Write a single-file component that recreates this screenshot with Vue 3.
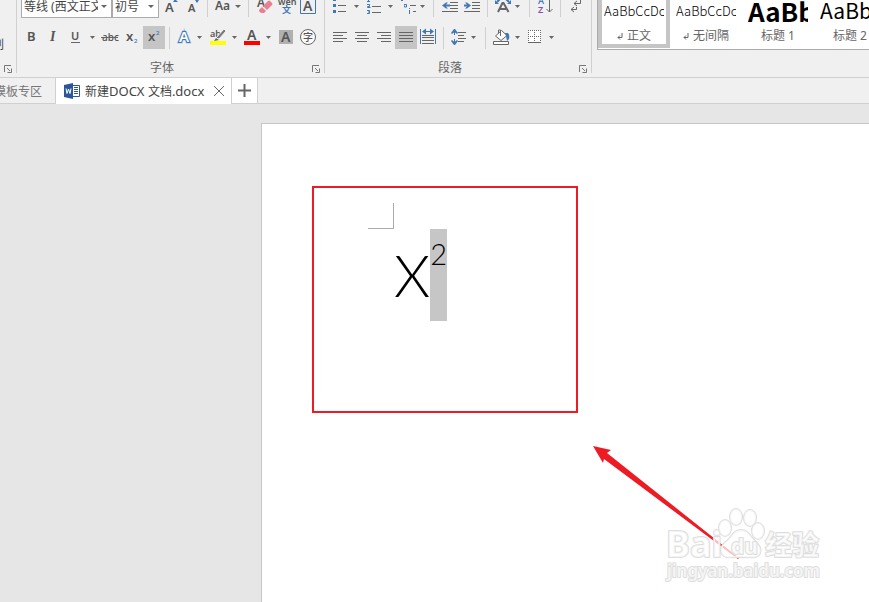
<script setup>
import { ref } from 'vue'

const fontName = ref('body')
const fontSize = ref('initial')
const selectedStyle = ref(0)

const styles = [
  { name: '正文', sample: 'AaBbCcDc', size: 'small', mark: true },
  { name: '无间隔', sample: 'AaBbCcDc', size: 'small', mark: true },
  { name: '标题 1', sample: 'AaBb', size: 'large', mark: false },
  { name: '标题 2', sample: 'AaBbC', size: 'medium', mark: false }
]
</script>

<template>
  <div class="app">
    <header class="ribbon">
      <section class="group clipboard" aria-label="剪贴板">
        <button class="painter">格式刷</button>
        <button class="launcher" aria-label="剪贴板选项">
          <svg width="8" height="8" viewBox="0 0 8 8"><path d="M.5 7V.5H7M3 3l3 3M7.500 3.500V7.500H3.500" /></svg>
        </button>
      </section>

      <section class="group font" aria-label="字体">
        <div class="row top">
          <label class="combo wide">
            <select v-model="fontName" aria-label="字体名称"><option value="body">等线 (西文正文)</option></select>
            <i class="caret"></i>
          </label>
          <label class="combo narrow">
            <select v-model="fontSize" aria-label="字号"><option value="initial">初号</option></select>
            <i class="caret"></i>
          </label>
          <button aria-label="增大字号">
            <svg width="24" height="18" viewBox="159 0 24 18"><text x="165" y="12" class="g" font-size="13">A</text><path class="bf" d="M173 2l2-3 3 3z" /></svg>
          </button>
          <button aria-label="减小字号">
            <svg width="24" height="18" viewBox="183 0 24 18"><text x="188" y="12" class="g" font-size="11">A</text><path class="bf" d="M195 0h4l-2 3z" /></svg>
          </button>
          <i class="sep"></i>
          <button aria-label="更改大小写">
            <svg width="40" height="18" viewBox="208 0 40 18"><text x="215" y="10" class="g" font-size="12">Aa</text><path class="cf" d="M235 5h6l-3 3z" /></svg>
          </button>
          <i class="sep"></i>
          <button aria-label="清除格式">
            <svg width="27" height="18" viewBox="250 0 27 18"><text x="258" y="7" class="g" font-size="12">A</text><path fill="#e8808f" d="M264 6l5-5q1-1 2 0l2 2q1 1 0 2l-5 5z" /><path fill="#e8808f" d="M263 7l4 4-2 2h-3l-2-2v-1z" /></svg>
          </button>
          <button aria-label="拼音指南">
            <svg width="22" height="18" viewBox="277 0 22 18"><text x="279" y="5" class="g" font-size="9">wén</text><text x="283" y="13" class="b" font-size="9">文</text></svg>
          </button>
          <button aria-label="字符边框">
            <svg width="22" height="18" viewBox="299 0 22 18"><path class="bs" d="M301.500 0v13.500h15V0" /><text x="304" y="11" class="g" font-size="14">A</text></svg>
          </button>
        </div>

        <div class="row">
          <button aria-label="加粗"><svg width="22" height="23" viewBox="20 26 22 23"><text x="27" y="41" class="g" font-size="13" font-weight="700">B</text></svg></button>
          <button aria-label="倾斜"><svg width="22" height="23" viewBox="42 26 22 23"><text x="50" y="41" class="g serif" font-size="14">I</text></svg></button>
          <button aria-label="下划线"><svg width="34" height="23" viewBox="64 26 34 23"><text x="71" y="40" class="g" font-size="11">U</text><path class="gs" d="M71 42.500h9" /><path class="cf" d="M90 36h5l-2.500 3z" /></svg></button>
          <button aria-label="删除线"><svg width="23" height="23" viewBox="98 26 23 23"><text x="102" y="41" class="g thin" font-size="10">abc</text><path class="gs" d="M101 37.500h17" /></svg></button>
          <button aria-label="下标"><svg width="22" height="23" viewBox="121 26 22 23"><text x="126" y="41" class="g" font-size="13" font-weight="700">x</text><text x="134" y="43" class="b" font-size="6">2</text></svg></button>
          <button class="on" aria-label="上标" aria-pressed="true"><svg width="22" height="23" viewBox="143 26 22 23"><text x="148" y="41" class="g" font-size="13" font-weight="700">x</text><text x="156" y="35" class="b" font-size="6">2</text></svg></button>
          <i class="sep spaced"></i>
          <button aria-label="文本效果"><svg width="32" height="23" viewBox="174 26 32 23"><text x="179" y="42" font-size="15" font-weight="600" fill="#fff" stroke="#b9d3ee" stroke-width="3" paint-order="stroke">A</text><text x="179" y="42" font-size="15" font-weight="600" fill="#fff" stroke="#3f78b5" stroke-width="2" paint-order="stroke">A</text><path class="cf" d="M197 36h5l-2.500 3z" /></svg></button>
          <button aria-label="突出显示"><svg width="35" height="23" viewBox="206 26 35 23"><text x="210" y="37" class="g" font-size="9">ab</text><path fill="#777" stroke="#f0f0f0" d="M224 29l2 2-7 8-3-1z" /><path fill="#666" d="M216 38l3 2-5 1z" /><path fill="#ff0" d="M210 41h16v4h-16z" /><path class="cf" d="M232 36h5l-2.500 3z" /></svg></button>
          <button aria-label="字体颜色"><svg width="34" height="23" viewBox="241 26 34 23"><text x="247" y="40" class="g" font-size="14">A</text><path fill="#f00" d="M244 41h16v4h-16z" /><path class="cf" d="M266 36h5l-2.500 3z" /></svg></button>
          <button aria-label="字符底纹"><svg width="22" height="23" viewBox="275 26 22 23"><path fill="#b0b0b0" d="M279 30h14v14h-14z" /><text x="281" y="42" class="g" font-size="14">A</text></svg></button>
          <button aria-label="带圈字符"><svg width="22" height="23" viewBox="297 26 22 23"><circle class="gs" fill="#fafafa" cx="308" cy="37" r="7.500" /><text x="303" y="41" class="g thin" font-size="10">字</text></svg></button>
        </div>
        <footer class="caption"><span>字体</span>
          <button class="launcher" aria-label="字体选项"><svg width="8" height="8" viewBox="0 0 8 8"><path d="M.5 7V.5H7M3 3l3 3M7.500 3.500V7.500H3.500" /></svg></button>
        </footer>
      </section>

      <section class="group paragraph" aria-label="段落">
        <div class="row top">
          <button aria-label="项目符号"><svg width="34" height="18" viewBox="329 0 34 18"><path class="bf" d="M333 0h3v1h-3zM333 4h3v3h-3zM333 10h3v3h-3z" /><path class="gs" d="M338 5.500h8M338 11.500h8" /><path class="cf" d="M354 5h5l-2.500 3z" /></svg></button>
          <button aria-label="编号"><svg width="34" height="18" viewBox="363 0 34 18"><path class="bs" d="M368.500 0v1M367 1.500h3M367 4.500h2.500v2h-2v1h3M367 10.500h2.500v3H367M368 12h1.500" /><path class="gs" d="M372 6.500h9M372 12.500h9" /><path class="cf" d="M388 5h5l-2.500 3z" /></svg></button>
          <button aria-label="多级列表"><svg width="36" height="18" viewBox="397 0 36 18"><path class="bs" d="M401 .500h2M404 4.500h2.500v2.500h-2V5.500M409.500 8v1M409.500 10v4" /><path class="gs" d="M410 5.500h6M413 11.500h3" /><path class="cf" d="M420 5h5l-2.500 3z" /></svg></button>
          <i class="sep"></i>
          <button aria-label="减少缩进量"><svg width="27" height="18" viewBox="434 0 27 18"><path class="gs" d="M442 11.500h16M450 8.500h8M450 5.500h8M450 2.500h8M442-.500h16" /><path class="bf" d="M442 5.500l4-3h2l-2 2h4v2h-4l2 2h-2z" /></svg></button>
          <button aria-label="增加缩进量"><svg width="26" height="18" viewBox="461 0 26 18"><path class="gs" d="M464 11.500h16M472 8.500h8M472 5.500h8M472 2.500h8M464-.500h16" /><path class="bf" d="M471 5.500l-4-3h-2l2 2h-3v2h3l-2 2h2z" /></svg></button>
          <i class="sep"></i>
          <button aria-label="中文版式"><svg width="41" height="18" viewBox="488 0 41 18"><path stroke="#666" stroke-width="2" fill="none" d="M498 12l4.500-9h1l5 9M500 9h6" /><path stroke="#3f78b5" stroke-width="2" fill="none" d="M497 2l4-4M509 2l-4-4" /><path class="bf" d="M495 0v4h4zM511 0v4h-4z" /><path class="cf" d="M515 5h5l-2.500 3z" /></svg></button>
          <i class="sep"></i>
          <button aria-label="排序"><svg width="30" height="18" viewBox="530 0 30 18"><text x="538" y="4" class="b" font-size="9">A</text><text x="538" y="13" font-size="9" font-weight="600" fill="#8250ab">Z</text><path class="gs" d="M549.500 0v12M546.500 9l3 3 3-3" /></svg></button>
          <i class="sep"></i>
          <button aria-label="显示编辑标记"><svg width="26" height="18" viewBox="561 0 26 18"><path class="gs" d="M580.500 0v3.500H574M577 1l-3 2.500L577 6M576.500 7v2.500H571M574 7l-3 2.500 3 2.500" /></svg></button>
        </div>

        <div class="row">
          <button aria-label="左对齐"><svg width="22" height="23" viewBox="329 26 22 23"><path class="gs" d="M333 32.500h14M333 35.500h10M333 38.500h14M333 41.500h10" /></svg></button>
          <button aria-label="居中"><svg width="22" height="23" viewBox="351 26 22 23"><path class="gs" d="M355 32.500h14M357 35.500h10M355 38.500h14M357 41.500h10" /></svg></button>
          <button aria-label="右对齐"><svg width="22" height="23" viewBox="373 26 22 23"><path class="gs" d="M377 32.500h14M381 35.500h10M377 38.500h14M381 41.500h10" /></svg></button>
          <button class="on" aria-label="两端对齐" aria-pressed="true"><svg width="22" height="23" viewBox="395 26 22 23"><path class="gs" d="M399 32.500h14M399 35.500h14M399 38.500h14M399 41.500h14" /></svg></button>
          <button aria-label="分散对齐"><svg width="26" height="23" viewBox="417 26 26 23"><path class="bs" d="M420.500 29v15M435.500 29v15M423 31.500h10" /><path class="bf" d="M422 31.500l4-3v6zM434 31.500l-4-3v6z" /><path class="gs" d="M422 35.500h12M422 37.500h12M422 40.500h12M422 43.500h12" /></svg></button>
          <i class="sep"></i>
          <button aria-label="行距"><svg width="41" height="23" viewBox="444 26 41 23"><path class="bs" d="M454.500 30v5M454.500 39v5" /><path class="bf" d="M451 33l3-4h1l3 4-1 1-2.500-2-2.500 2zM451 41l3 4h1l3-4-1-1-2.500 2-2.500-2z" /><path class="gs" d="M458 32.500h8M458 35.500h6M458 38.500h8M458 41.500h6" /><path class="cf" d="M471 36h5l-2.500 3z" /></svg></button>
          <i class="sep"></i>
          <button aria-label="底纹"><svg width="36" height="23" viewBox="486 26 36 23"><path class="gs" fill="#fff" d="M501.500 30.500l5.500 5-6 5-5.500-4.500z" /><path class="gs" d="M500.500 36v-6h-2v3" /><path class="bf" d="M505 33h3q2 2 1 6l-2 2-1-5z" /><path class="gs" fill="#fff" d="M493.500 41.500h15v3h-15z" /><path class="cf" d="M515 36h5l-2.500 3z" /></svg></button>
          <button aria-label="边框"><svg width="36" height="23" viewBox="522 26 36 23"><path fill="#fff" d="M528 30h13v12h-13z" /><path class="gs" stroke-dasharray="1 1" d="M528 30.500h13M528 36.500h13M528.500 30v12M534.500 30v12M540.500 30v12" /><path class="gs" d="M528 42.500h13" /><path class="cf" d="M549 36h5l-2.500 3z" /></svg></button>
        </div>
        <footer class="caption"><span>段落</span>
          <button class="launcher" aria-label="段落选项"><svg width="8" height="8" viewBox="0 0 8 8"><path d="M.5 7V.5H7M3 3l3 3M7.500 3.500V7.500H3.500" /></svg></button>
        </footer>
      </section>

      <section class="gallery" aria-label="样式">
        <button
          v-for="(style, i) in styles"
          :key="style.name"
          class="style"
          :class="{ selected: selectedStyle === i }"
          @click="selectedStyle = i"
        >
          <span class="sample" :class="style.size">{{ style.sample }}</span>
          <span class="style-name">
            <svg v-if="style.mark" width="6" height="7" viewBox="0 0 6 7"><path class="gs" d="M5 0v4.500H1M3 2.500l-2 2 2 2" /></svg>
            {{ style.name }}
          </span>
        </button>
      </section>
    </header>

    <nav class="tabs">
      <button class="tab templates"><span>模板专区</span></button>
      <div class="tab active">
        <svg width="16" height="16" viewBox="0 0 16 16"><path fill="#fff" stroke="#2b579a" d="M8.500 2.500h7v11h-7z" /><path stroke="#2b579a" d="M10 4.500h4M10 6.500h4M10 8.500h4M10 10.500h4" /><path fill="#2b579a" d="M0 2l9-2v16l-9-2z" /><path fill="none" stroke="#fff" d="M2 5.500l1 5 1.500-4.500L6 10.500l1-5" /></svg>
        <a href="#document">新建<span class="latin">DOCX </span>文档<span class="latin">.docx</span></a>
        <button class="close" aria-label="关闭"><svg width="12" height="12" viewBox="0 0 12 12"><path d="M1 1l10 10M11 1L1 11" /></svg></button>
      </div>
      <button class="tab add" aria-label="新建标签"><svg width="13" height="13" viewBox="0 0 13 13"><path d="M6.500 0v13M0 6.500h13" /></svg></button>
    </nav>

    <main class="workspace">
      <article id="document" class="page">
        <div class="crop"></div>
        <p class="formula">X<sup>2</sup></p>
        <div class="frame"></div>
        <svg class="overlay" width="240" height="150" viewBox="590 440 240 150" aria-hidden="true">
          <path fill="#ed1c24" d="M593 446l18 4-4 3 132 105-1 1-134-100-1 4z" />
          <g class="mark">
            <text x="666" y="557" font-size="36" font-weight="700">Bai</text>
            <ellipse cx="725" cy="528" rx="6" ry="8" />
            <ellipse cx="736" cy="517" rx="6" ry="8" />
            <ellipse cx="750" cy="518" rx="6" ry="8" />
            <ellipse cx="758" cy="531" rx="6" ry="8" />
            <path d="M741 530c-7 0-9 6-13 10-5 4-9 8-6 14 3 5 9 3 19 3s17 2 19-4c2-5-2-9-6-13s-6-10-13-10z" />
            <text x="731" y="554" font-size="21" font-weight="700">du</text>
            <text x="765" y="555" font-size="27" font-weight="700">经验</text>
            <text x="667" y="577" font-size="17" font-weight="600">jingyan.baidu.com</text>
          </g>
        </svg>
      </article>
    </main>
  </div>
</template>

<style>
body {
  margin: 0;
  background: #e6e6e6;
}
</style>

<style scoped>
.app {
  display: flex;
  flex-direction: column;
  min-height: 100vh;
  overflow: hidden;
  font-family: "Noto Sans", "Noto Sans CJK SC", sans-serif;
  font-size: 12px;
  color: #444;
}
button {
  display: flex;
  align-items: center;
  justify-content: center;
  flex: none;
  padding: 0;
  border: 0;
  background: none;
  font: inherit;
  color: inherit;
}
svg {
  display: block;
  flex: none;
}
.g { fill: #555; font-weight: 600; }
.g.thin { font-weight: 500; }
.g.serif { font-family: "Liberation Serif", serif; font-style: italic; font-weight: 700; }
.b { fill: #3f78b5; font-weight: 600; }
.bf { fill: #3f78b5; }
.cf { fill: #666; }
.gs { stroke: #666; }
.bs { stroke: #3f78b5; }
path.gs:not([fill]), path.bs { fill: none; }

.ribbon {
  display: flex;
  height: 77px;
  background: #f0f0f0;
  border-bottom: 1px solid #d0d0d0;
}
.group {
  display: flex;
  flex-direction: column;
  flex: none;
  box-sizing: border-box;
  height: 73px;
  border-right: 1px solid #d0d0d0;
}
.clipboard {
  width: 17px;
  align-items: flex-end;
  justify-content: flex-end;
  gap: 12px;
  padding-right: 4px;
  overflow: hidden;
}
.painter { line-height: 16px; margin-right: 8px; white-space: nowrap; }
.font { width: 308px; padding-left: 3px; }
.paragraph { width: 267px; padding-left: 4px; }
.row {
  display: flex;
  flex: none;
  align-items: center;
  height: 23px;
}
.row.top {
  align-items: flex-end;
  height: 18px;
  margin-bottom: 8px;
  overflow: hidden;
}
.sep {
  flex: none;
  width: 1px;
  height: 22px;
  background: #d0d0d0;
}
.sep.spaced { margin: 0 4px; }
.top .sep { align-self: flex-start; height: 17px; }
.on { background: #c5c5c5; }
.combo {
  display: flex;
  align-items: center;
  flex: none;
  box-sizing: border-box;
  height: 23px;
  border: 1px solid #ababab;
  background: #fff;
}
.combo.wide { width: 91px; margin-left: 1px; }
.combo.narrow { width: 47px; }
.combo select {
  appearance: none;
  flex: 1;
  min-width: 0;
  padding: 0 0 0 2px;
  border: 0;
  background: none;
  font: inherit;
  color: #444;
}
.caret {
  flex: none;
  margin: 0 4px 0 3px;
  border: 3px solid transparent;
  border-top-color: #666;
  border-bottom: 0;
}
.caption {
  display: flex;
  flex: none;
  align-items: center;
  height: 16px;
  margin-top: 11px;
  line-height: 16px;
  color: #666;
}
.caption span { flex: 1; text-align: center; padding-right: 8px; }
.caption .launcher { margin-right: 4px; margin-top: 2px; }
.launcher path { fill: none; stroke: #777; }

.gallery {
  display: flex;
  flex: 1;
  min-width: 0;
  box-sizing: border-box;
  height: 50px;
  margin-left: 5px;
  border-left: 1px solid #ababab;
  border-bottom: 1px solid #ababab;
  background: #fff;
  overflow: hidden;
}
.style {
  flex-direction: column;
  justify-content: flex-end;
  box-sizing: border-box;
  width: 72px;
  height: 48px;
  padding: 0 6px 3px;
}
.style.selected {
  border: solid #c5c5c5;
  border-width: 0 4px 4px;
  padding: 0 2px;
}
.style.selected .style-name { margin-bottom: -1px; }
.sample {
  display: flex;
  flex: none;
  align-items: center;
  align-self: stretch;
  height: 30px;
  margin-bottom: 2px;
  font-family: "Noto Sans CJK SC", sans-serif;
  color: #000;
  white-space: nowrap;
  overflow: hidden;
}
.sample.small { font-size: 13px; font-weight: 300; }
.sample.large { font-size: 26px; font-weight: 600; }
.sample.medium { font-size: 21px; }
.style-name {
  display: flex;
  flex: none;
  align-items: center;
  gap: 4px;
  line-height: 18px;
  color: #666;
}

.tabs {
  display: flex;
  height: 25px;
  background: #f0f0f0;
  border-bottom: 1px solid #d0d0d0;
}
.tab {
  box-sizing: border-box;
  height: 25px;
  border-right: 1px solid #d0d0d0;
}
.templates {
  justify-content: flex-end;
  width: 56px;
  padding-right: 13px;
  color: #777;
  white-space: nowrap;
}
.active {
  display: flex;
  align-items: center;
  height: 26px;
  padding: 0 6px 0 8px;
  background: #fff;
}
.active a {
  margin: 0 9px 0 5px;
  color: #444;
  font-size: 12px;
  text-decoration: none;
  white-space: nowrap;
}
.latin { font-size: 13px; }
.close path { stroke: #666; }
.add { width: 26px; background: #fff; }
.add path { stroke: #666; stroke-width: 2; }

.workspace {
  display: flex;
  flex: 1;
  padding: 19px 0 0 261px;
  background: #e6e6e6;
}
.page {
  position: relative;
  flex: 1;
  padding: 79px 0 0 106px;
  border: solid #c6c6c6;
  border-width: 1px 0 0 1px;
  background: #fff;
}
.crop {
  box-sizing: border-box;
  width: 26px;
  height: 26px;
  border: solid #ababab;
  border-width: 0 1px 1px 0;
}
.formula {
  display: flex;
  margin: 0 0 0 26px;
  font-family: Lato, "Noto Sans CJK SC", sans-serif;
  font-size: 58px;
  font-weight: 300;
  line-height: 92px;
  color: #000;
}
.formula sup {
  height: 92px;
  background: #c6c6c6;
  font-size: 29px;
  line-height: 50px;
}
.frame {
  position: absolute;
  left: 50px;
  top: 62px;
  box-sizing: border-box;
  width: 266px;
  height: 227px;
  border: 2px solid #ed1c24;
}
.overlay {
  position: absolute;
  left: 328px;
  top: 316px;
}
.mark {
  fill: rgba(255, 255, 255, 0.7);
  stroke: #dedede;
  stroke-width: 2;
  stroke-linejoin: round;
  paint-order: stroke;
}
</style>
